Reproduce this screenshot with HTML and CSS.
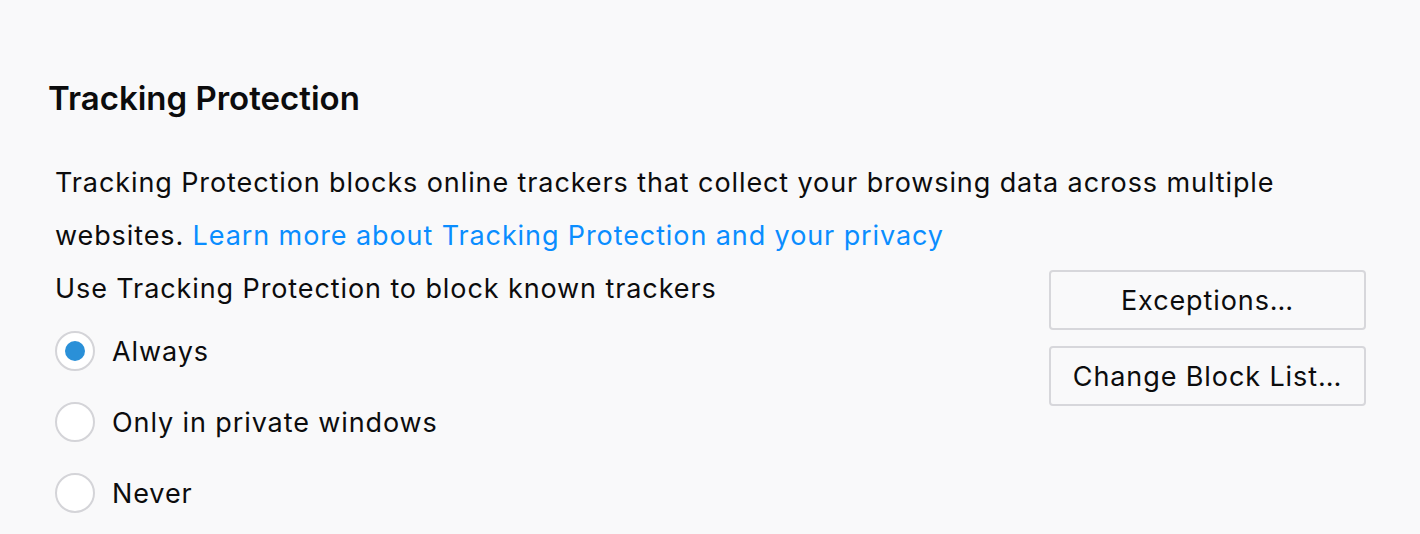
FILE: index.html
```html
<!DOCTYPE html>
<html lang="en">
<head>
    <meta charset="UTF-8">
    <title>Tracking Protection</title>
    <link rel="stylesheet" href="styles.css">
</head>
<body>
    <section class="prefs-group">
        <h2 class="group-title">Tracking Protection</h2>
        <div class="group-body">
            <p class="description">Tracking Protection blocks online trackers that collect your browsing data across multiple websites. <a href="#" class="learn-more">Learn more about Tracking Protection and your privacy</a></p>
            <div class="options-row">
                <div class="options">
                    <div class="options-label">Use Tracking Protection to block known trackers</div>
                    <label class="radio">
                        <input type="radio" name="tracking" value="always" checked>
                        <span class="radio-mark"></span>
                        <span>Always</span>
                    </label>
                    <label class="radio">
                        <input type="radio" name="tracking" value="private">
                        <span class="radio-mark"></span>
                        <span>Only in private windows</span>
                    </label>
                    <label class="radio">
                        <input type="radio" name="tracking" value="never">
                        <span class="radio-mark"></span>
                        <span>Never</span>
                    </label>
                </div>
                <div class="actions">
                    <button class="btn">Exceptions…</button>
                    <button class="btn">Change Block List…</button>
                </div>
            </div>
        </div>
    </section>
</body>
</html>
```

FILE: styles.css
```css
body {
    margin: 0;
    background-color: #f9f9fa;
    color: #0c0c0d;
    font-family: Inter, "Noto Sans", sans-serif;
}
.prefs-group {
    padding: 77px 54px 0 48px;
}
.group-title {
    margin: 0;
    font-size: 33px;
    font-weight: 600;
    line-height: 42px;
}
.group-body {
    margin-top: 37px;
    padding-left: 7px;
    font-size: 27px;
    letter-spacing: 0.9px;
}
.description {
    margin: 0;
    line-height: 53px;
    max-width: 1240px;
}
.learn-more {
    color: #0a8dff;
    text-decoration: none;
}
.options-row {
    display: flex;
    justify-content: space-between;
    align-items: flex-start;
}
.options-label {
    line-height: 54px;
}
.radio {
    display: flex;
    align-items: center;
    gap: 17px;
    height: 70px;
    margin-bottom: 1px;
}
.radio input {
    display: none;
}
.radio-mark {
    width: 36px;
    height: 36px;
    border: 2px solid #d4d4d8;
    border-radius: 50%;
    background: #fff;
    display: flex;
    align-items: center;
    justify-content: center;
}
.radio input:checked + .radio-mark::after {
    content: "";
    width: 20px;
    height: 20px;
    border-radius: 50%;
    background: #2a90d8;
}
.actions {
    display: flex;
    flex-direction: column;
    gap: 16px;
    margin-top: 8px;
}
.btn {
    width: 317px;
    height: 60px;
    border: 2px solid #d7d7db;
    border-radius: 4px;
    background: #f9f9fa;
    color: #0c0c0d;
    font-family: inherit;
    font-size: 27px;
    letter-spacing: 0.9px;
}
```
